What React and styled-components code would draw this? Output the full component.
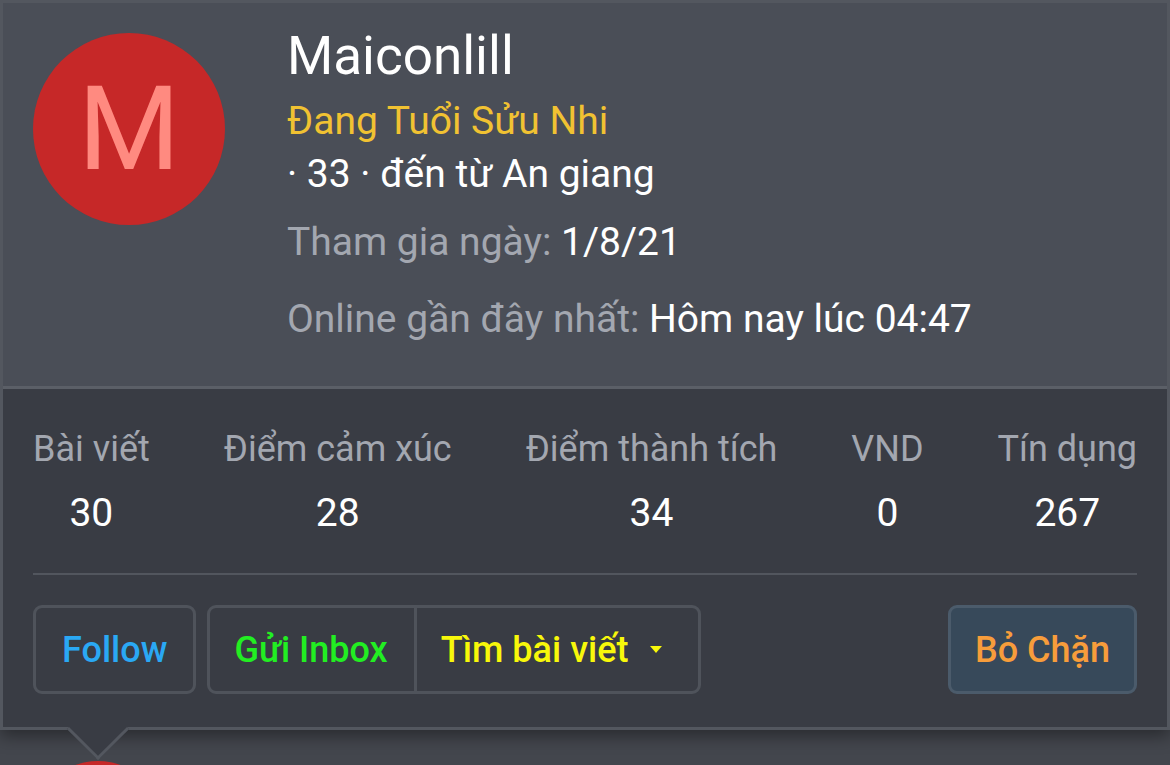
import React from "react";
import styled, { createGlobalStyle } from "styled-components";

const GlobalStyle = createGlobalStyle`
  html, body {
    margin: 0;
    padding: 0;
    background: #43464d;
    overflow: hidden;
  }

  body {
    font-family: Roboto, "Noto Sans", "Liberation Sans", sans-serif;
  }
`;

const Page = styled.div`
  display: flex;
  flex-direction: column;
  height: 765px;
  overflow: hidden;
  background: #43464d;
`;

const ActionBar = styled.div`
  display: flex;
  align-items: flex-end;
  height: 3px;
  overflow: hidden;
  background: #33363c;
  padding-left: 33px;
  font-size: 35px;
  line-height: 1;
  color: #9ea2aa;
`;

const BarMark = styled.span`
  width: 4px;
  height: 3px;
  background: #2196f3;
  margin-right: ${(p) => p.$gap}px;
`;

const BarIcon = styled.span`
  width: ${(p) => p.$w}px;
  height: 3px;
  background: #9ea2aa;
  margin-right: 14px;
`;

const BarText = styled.span`
  margin-bottom: -4px;
  white-space: nowrap;
  margin-right: ${(p) => p.$gap || 0}px;
`;

const Tooltip = styled.div`
  position: relative;
  border: 3px solid #53575f;
  background: #393c44;
  box-shadow: 0 6px 16px rgba(0, 0, 0, 0.4);
`;

const Header = styled.div`
  display: flex;
  align-items: flex-start;
  gap: 62px;
  padding: 30px 30px 40px;
  background: #4a4e57;
  border-bottom: 3px solid #5b5f67;
`;

const Avatar = styled.div`
  flex-shrink: 0;
  width: ${(p) => p.$size}px;
  height: ${(p) => p.$size}px;
  border-radius: 50%;
  background: #c62828;
  color: #ff8a80;
  font-size: 117px;
  line-height: ${(p) => p.$size}px;
  text-align: center;
`;

const Info = styled.div`
  display: flex;
  flex-direction: column;
`;

const Name = styled.div`
  margin-top: -5px;
  font-size: 53px;
  line-height: 56px;
  color: #ffffff;
`;

const Line = styled.div`
  margin-top: ${(p) => p.$top || 0}px;
  font-size: 39px;
  line-height: 53px;
  color: ${(p) => p.$color || "#ffffff"};
  white-space: nowrap;
`;

const Muted = styled.span`
  color: #a3a7b0;
`;

const Body = styled.div`
  padding: 37px 30px 33px;
`;

const Stats = styled.div`
  display: flex;
  justify-content: space-between;
  padding-bottom: 37px;
  border-bottom: 2px solid #52565e;
`;

const Stat = styled.div`
  text-align: center;
`;

const StatLabel = styled.div`
  font-size: 36px;
  line-height: 46px;
  color: #a3a7b0;
  white-space: nowrap;
`;

const StatValue = styled.div`
  margin-top: 18px;
  font-size: 39px;
  line-height: 46px;
  color: #ffffff;
`;

const Actions = styled.div`
  display: flex;
  align-items: center;
  gap: 11px;
  margin-top: 30px;
`;

const Button = styled.button`
  display: inline-flex;
  align-items: center;
  height: 89px;
  padding: 0 ${(p) => p.$pad || 26}px;
  margin-left: ${(p) => (p.$push ? "auto" : "0")};
  border: 3px solid ${(p) => p.$border || "#4f535b"};
  border-radius: 9px;
  background: ${(p) => p.$bg || "transparent"};
  color: ${(p) => p.$color};
  font-family: inherit;
  font-size: 36px;
  font-weight: 500;
  white-space: nowrap;
`;

const Group = styled.div`
  display: flex;
  height: 89px;
  box-sizing: border-box;
  border: 3px solid #4f535b;
  border-radius: 9px;
`;

const GroupButton = styled.button`
  display: inline-flex;
  align-items: center;
  gap: 22px;
  padding: 0 ${(p) => p.$right || 27}px 0 24px;
  border: none;
  border-left: ${(p) => (p.$divided ? "3px solid #4f535b" : "none")};
  background: transparent;
  color: ${(p) => p.$color};
  font-family: inherit;
  font-size: 36px;
  font-weight: 500;
  white-space: nowrap;
`;

const Caret = styled.span`
  width: 0;
  height: 0;
  border-left: 6.5px solid transparent;
  border-right: 6.5px solid transparent;
  border-top: 7px solid currentColor;
`;

const Arrow = styled.div`
  position: absolute;
  left: 73px;
  bottom: -24px;
  width: 44px;
  height: 44px;
  box-sizing: border-box;
  background: #393c44;
  border-right: 3px solid #53575f;
  border-bottom: 3px solid #53575f;
  transform: rotate(45deg);
`;

const PostAvatar = styled.div`
  flex-shrink: 0;
  width: 132px;
  height: 132px;
  margin: 31px 0 0 32px;
  border-radius: 50%;
  background: #c62828;
`;

const stats = [
  { label: "Bài viết", value: "30" },
  { label: "Điểm cảm xúc", value: "28" },
  { label: "Điểm thành tích", value: "34" },
  { label: "VND", value: "0" },
  { label: "Tín dụng", value: "267" },
];

export default function App() {
  return (
    <Page>
      <GlobalStyle />

      <ActionBar>
        <BarMark $gap={32} />
        <BarMark $gap={45} />
        <BarIcon $w={29} />
        <BarText $gap={286}>Học vị phẩm</BarText>
        <BarText $gap={46}>Like</BarText>
        <BarIcon $w={22} />
        <BarText $gap={44}>Audio</BarText>
        <BarIcon $w={14} />
        <BarText>Trả lời</BarText>
      </ActionBar>

      <Tooltip>
        <Header>
          <Avatar $size={192}>M</Avatar>
          <Info>
            <Name>Maiconlill</Name>
            <Line $top={11} $color="#f1c232">
              Đang Tuổi Sửu Nhi
            </Line>
            <Line>· 33 · đến từ An giang</Line>
            <Line $top={15}>
              <Muted>Tham gia ngày:</Muted> 1/8/21
            </Line>
            <Line $top={24}>
              <Muted>Online gần đây nhất:</Muted> Hôm nay lúc 04:47
            </Line>
          </Info>
        </Header>

        <Body>
          <Stats>
            {stats.map((s) => (
              <Stat key={s.label}>
                <StatLabel>{s.label}</StatLabel>
                <StatValue>{s.value}</StatValue>
              </Stat>
            ))}
          </Stats>

          <Actions>
            <Button $color="#2aa8f4">Follow</Button>
            <Group>
              <GroupButton $color="#22ee22" $right={26}>
                Gửi Inbox
              </GroupButton>
              <GroupButton $color="#f8f80a" $divided $right={36}>
                Tìm bài viết
                <Caret />
              </GroupButton>
            </Group>
            <Button $push $pad={24} $color="#f79d3b" $bg="#37495a" $border="#4b5b6b">
              Bỏ Chặn
            </Button>
          </Actions>
        </Body>

        <Arrow />
      </Tooltip>

      <PostAvatar />
    </Page>
  );
}
